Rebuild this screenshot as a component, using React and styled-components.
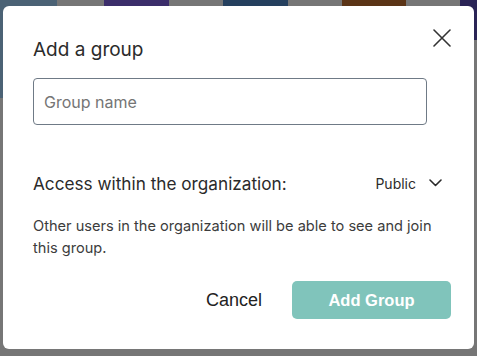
import styled, { createGlobalStyle } from 'styled-components'

const Global = createGlobalStyle`
    html, body {
        margin: 0;
        padding: 0;
    }
    body {
        background: #767676;
        font-family: Inter, "Noto Sans", sans-serif;
    }
`

const Page = styled.div`
    position: relative;
    width: 477px;
    height: 356px;
    overflow: hidden;
    background: #767676;
`

const Backdrop = styled.div`
    display: flex;
    height: 100%;
`

const Tile = styled.div`
    width: ${(p) => p.$w}px;
    height: ${(p) => p.$h || 60}px;
    background: ${(p) => p.$bg};
    flex-shrink: 0;
`

const Modal = styled.div`
    position: absolute;
    top: 6px;
    left: 3px;
    width: 471px;
    height: 343px;
    box-sizing: border-box;
    background: #fff;
    border-radius: 6px;
    padding: 30px 23px 0 30px;
    display: flex;
    flex-direction: column;
`

const Head = styled.div`
    display: flex;
    justify-content: space-between;
    align-items: flex-start;
`

const Title = styled.h2`
    margin: 0;
    font-size: 19px;
    font-weight: 400;
    line-height: 24px;
    color: #2b2b2b;
    padding-top: 2px;
`

const Close = styled.button`
    background: none;
    border: none;
    padding: 0;
    margin-top: -7px;
    width: 18px;
    height: 18px;
    display: flex;
    align-items: center;
    justify-content: center;
    color: #333;
    cursor: pointer;
`

const Input = styled.input`
    margin-top: 16px;
    width: 394px;
    height: 47px;
    box-sizing: border-box;
    border: 1px solid #6f7a86;
    border-radius: 4px;
    padding: 0 10px;
    font-family: Inter, "Noto Sans", sans-serif;
    font-size: 16px;
    color: #333;
    outline: none;

    ::placeholder {
        color: #777;
    }
`

const Access = styled.div`
    margin-top: 47px;
    display: flex;
    justify-content: space-between;
    align-items: center;
    height: 22px;
`

const Label = styled.span`
    font-size: 17.2px;
    color: #2b2b2b;
`

const Select = styled.div`
    display: flex;
    align-items: center;
    gap: 13px;
    font-size: 14px;
    color: #2b2b2b;
    padding-right: 9px;
`

const Note = styled.p`
    margin: 21px 0 0;
    font-size: 14.6px;
    line-height: 22px;
    color: #3c3c3c;
`

const Footer = styled.div`
    margin-top: 22px;
    display: flex;
    justify-content: flex-end;
    align-items: center;
    gap: 30px;
`

const Button = styled.button`
    font-family: "Liberation Sans", Arial, sans-serif;
    font-size: ${(p) => (p.$primary ? '16.5px' : '18px')};
    border: none;
    border-radius: 5px;
    height: 38px;
    cursor: pointer;
    background: ${(p) => (p.$primary ? '#80c4bb' : 'none')};
    color: ${(p) => (p.$primary ? '#fff' : '#222')};
    font-weight: ${(p) => (p.$primary ? 700 : 400)};
    width: ${(p) => (p.$primary ? '159px' : 'auto')};
    padding: 0;
`

const tiles = [
    { w: 57, bg: '#4b6275', h: 98 },
    { w: 47, bg: '#767676' },
    { w: 65, bg: '#3b2d6a' },
    { w: 54, bg: '#767676' },
    { w: 65, bg: '#25405e' },
    { w: 54, bg: '#767676' },
    { w: 64, bg: '#5b3416' },
    { w: 54, bg: '#767676' },
    { w: 17, bg: '#2a2456', h: 40 },
]

export default function App() {
    return (
        <Page>
            <Global />
            <Backdrop>
                {tiles.map((t, i) => (
                    <Tile key={i} $w={t.w} $h={t.h} $bg={t.bg} />
                ))}
            </Backdrop>
            <Modal>
                <Head>
                    <Title>Add a group</Title>
                    <Close aria-label="Close">
                        <svg width="18" height="18" viewBox="0 0 18 18" fill="none" stroke="currentColor" strokeWidth="1.6" strokeLinecap="round">
                            <path d="M1 1L17 17M17 1L1 17" />
                        </svg>
                    </Close>
                </Head>
                <Input placeholder="Group name" />
                <Access>
                    <Label>Access within the organization:</Label>
                    <Select>
                        Public
                        <svg width="13" height="8" viewBox="0 0 13 8" fill="none" stroke="currentColor" strokeWidth="1.6" strokeLinecap="round" strokeLinejoin="round">
                            <path d="M1 1L6.5 6.5L12 1" />
                        </svg>
                    </Select>
                </Access>
                <Note>Other users in the organization will be able to see and join this group.</Note>
                <Footer>
                    <Button>Cancel</Button>
                    <Button $primary>Add Group</Button>
                </Footer>
            </Modal>
        </Page>
    )
}
